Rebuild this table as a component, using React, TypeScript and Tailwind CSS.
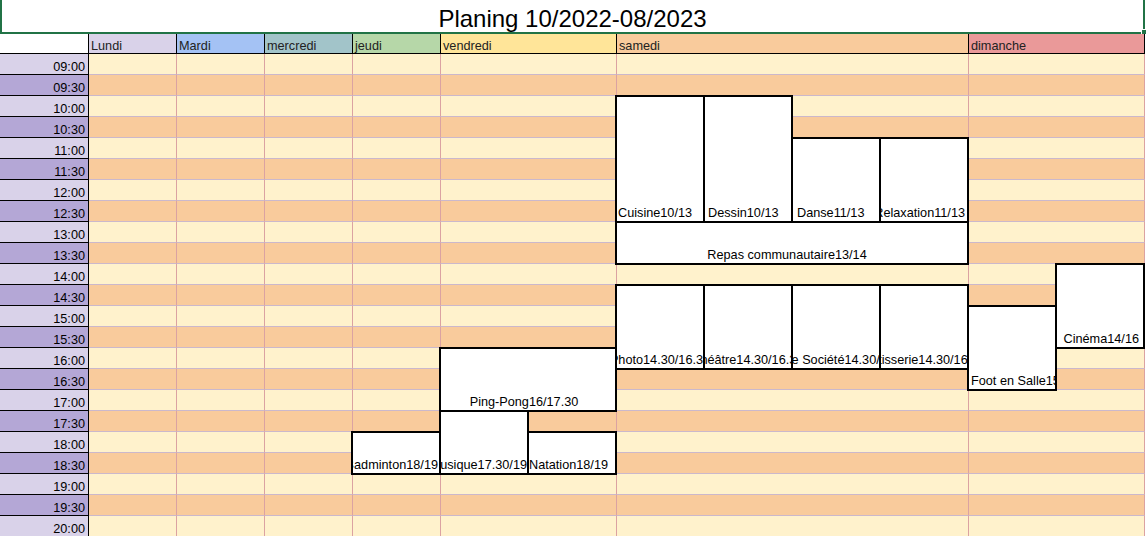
import React from 'react';

type Day = { name: string; w: string; head: string; edge: string };

const DAYS: Day[] = [
  { name: 'Lundi', w: 'w-[87px]', head: 'bg-[#d9d2e9]', edge: '' },
  { name: 'Mardi', w: 'w-[88px]', head: 'bg-[#a4c2f4]', edge: 'border-l' },
  { name: 'mercredi', w: 'w-[88px]', head: 'bg-[#a2c4c9]', edge: 'border-l' },
  { name: 'jeudi', w: 'w-[88px]', head: 'bg-[#b6d7a8]', edge: 'border-l' },
  { name: 'vendredi', w: 'w-[176px]', head: 'bg-[#ffe599]', edge: 'border-l' },
  { name: 'samedi', w: 'w-[352px]', head: 'bg-[#f9cb9c]', edge: 'border-l' },
  { name: 'dimanche', w: 'w-[177px]', head: 'bg-[#ea9999]', edge: 'border-l border-r' },
];

const TIMES: string[] = [];
for (let h = 9; h <= 20; h++) {
  const hh = String(h).padStart(2, '0');
  TIMES.push(`${hh}:00`);
  if (h < 20) TIMES.push(`${hh}:30`);
}

// grid rows: 1 = header, 2 = 09:00 ... ; cols: 1 = heures, 2 = lundi ... 13
const EVENTS = [
  { label: 'Cuisine10/13', pos: 'col-start-8 row-start-4 row-span-6', align: 'justify-start pl-px' },
  { label: 'Dessin10/13', pos: 'col-start-9 row-start-4 row-span-6', align: 'justify-start pl-[3px]' },
  { label: 'Danse11/13', pos: 'col-start-10 row-start-6 row-span-4', align: 'justify-start pl-[4px]' },
  { label: 'Relaxation11/13', pos: 'col-start-11 row-start-6 row-span-4', align: 'justify-end pr-[2px]' },
  { label: 'Repas communautaire13/14', pos: 'col-start-8 col-span-4 row-start-10 row-span-2', align: 'justify-center pr-[10px]' },
  { label: 'Photo14.30/16.30', pos: 'col-start-8 row-start-13 row-span-4', align: 'justify-center' },
  { label: 'Théâtre14.30/16.30', pos: 'col-start-9 row-start-13 row-span-4', align: 'justify-center' },
  { label: 'Jeu de Société14.30/16.30', pos: 'col-start-10 row-start-13 row-span-4', align: 'justify-center' },
  { label: 'Pâtisserie14.30/16.30', pos: 'col-start-11 row-start-13 row-span-4', align: 'justify-center' },
  { label: 'Foot en Salle15/17', pos: 'col-start-12 row-start-14 row-span-4', align: 'justify-start pl-[2px]' },
  { label: 'Cinéma14/16', pos: 'col-start-13 row-start-12 row-span-4', align: 'justify-end pr-[4px]' },
  { label: 'Ping-Pong16/17.30', pos: 'col-start-6 col-span-2 row-start-16 row-span-3', align: 'justify-center pr-[8px]' },
  { label: 'Musique17.30/19', pos: 'col-start-6 row-start-19 row-span-3', align: 'justify-end' },
  { label: 'Badminton18/19', pos: 'col-start-5 row-start-20 row-span-2', align: 'justify-end pr-px' },
  { label: 'Natation18/19', pos: 'col-start-7 row-start-20 row-span-2', align: 'justify-start' },
];

export default function App() {
  return (
    <div className="relative w-[1146px] h-[536px] overflow-hidden bg-white text-black font-['Liberation_Sans',Arial,sans-serif] text-[12.7px]">
      {/* titre */}
      <div className="w-[1145px] h-[34px] border-2 border-t-0 border-[#217346] flex items-end justify-center pb-px">
        <span className="text-[24px] leading-[24px]">Planing 10/2022-08/2023</span>
      </div>
      <div className="absolute left-[1141px] top-[29px] w-[6px] h-[6px] bg-[#217346] border border-white" />

      <div className="relative">
        {/* en-tête */}
        <div className="flex h-[20px]">
          <div className="w-[89px] bg-white border-r border-b border-black" />
          {DAYS.map(d => (
            <div key={d.name} className={`${d.w} ${d.head} ${d.edge} border-b border-black flex items-end pl-[2px] text-[#222] leading-[14px]`}>
              {d.name}
            </div>
          ))}
        </div>

        {/* lignes horaires */}
        {TIMES.map((t, i) => (
          <div key={t} className="flex h-[21px]">
            <div className={`w-[89px] border-r border-b border-black flex items-end justify-end pr-[3px] leading-[14px] ${i % 2 === 0 ? 'bg-[#d9d2e9]' : 'bg-[#b4a7d6]'}`}>
              {t}
            </div>
            {DAYS.map(d => (
              <div key={d.name} className={`${d.w} ${d.edge} border-b border-b-[#cbb8cc] border-l-[#dba2a2] border-r-[#dba2a2] ${i % 2 === 0 ? 'bg-[#fff2cc]' : 'bg-[#f9cb9c]'}`} />
            ))}
          </div>
        ))}

        {/* activités */}
        <div className="absolute left-0 top-0 grid grid-cols-[89px_87px_repeat(11,88px)] grid-rows-[20px_repeat(23,21px)]">
          {EVENTS.map(e => (
            <div key={e.label} className={`${e.pos} -m-px bg-white border-2 border-black overflow-hidden flex items-end pb-px leading-[14px] ${e.align}`}>
              <span className="whitespace-nowrap shrink-0">{e.label}</span>
            </div>
          ))}
        </div>
      </div>
    </div>
  );
}
